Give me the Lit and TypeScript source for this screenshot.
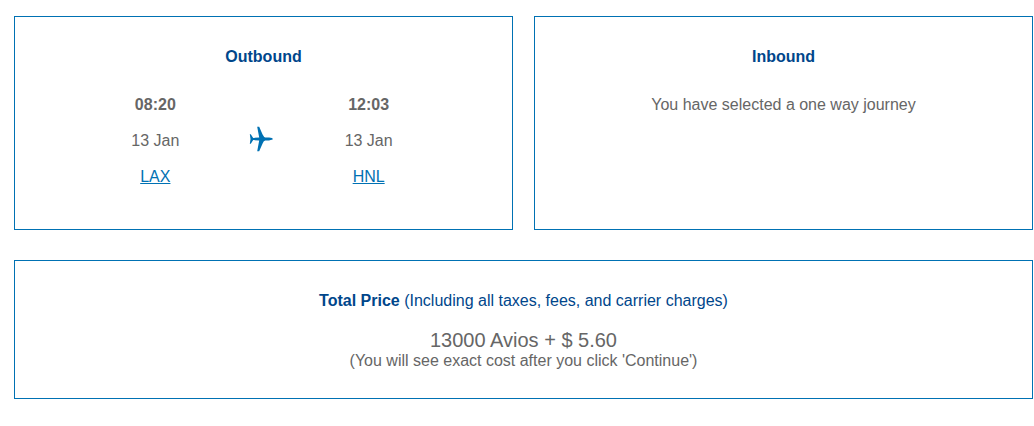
import { LitElement, html, css } from "lit";
import { customElement, property } from "lit/decorators.js";

interface Stop {
  time: string;
  date: string;
  airport: string;
}

const departure: Stop = { time: "08:20", date: "13 Jan", airport: "LAX" };
const arrival: Stop = { time: "12:03", date: "13 Jan", airport: "HNL" };

@customElement("flight-stop")
class FlightStop extends LitElement {
  @property({ attribute: false }) stop!: Stop;

  static styles = css`
    :host {
      display: flex;
      flex-direction: column;
      align-items: center;
      gap: 16px;
    }
    .time {
      font-weight: bold;
    }
    .airport {
      color: #0071b3;
      text-decoration: underline;
    }
  `;

  render() {
    return html`
      <span class="time">${this.stop.time}</span>
      <span>${this.stop.date}</span>
      <a class="airport" href="#${this.stop.airport}">${this.stop.airport}</a>
    `;
  }
}

@customElement("app-root")
class AppRoot extends LitElement {
  static styles = css`
    :host {
      display: block;
      padding: 16px 1px 27px 14px;
      background: #fff;
      color: #666;
      font: 16px/20px "Liberation Sans", Arial, sans-serif;
      text-align: center;
    }
    .summary {
      display: grid;
      grid-template-columns: 1fr 1fr;
      column-gap: 21px;
      row-gap: 30px;
    }
    .card {
      border: 1px solid #0071b3;
      padding: 30px 16px 27px;
    }
    .total {
      grid-column: 1 / -1;
    }
    .title {
      margin: 0 0 28px;
      font-size: 16px;
      color: #00468b;
    }
    .total .title {
      margin-bottom: 19px;
    }
    .note {
      font-weight: normal;
    }
    .route {
      display: grid;
      grid-template-columns: repeat(3, 1fr);
      max-width: 320px;
      margin: 0 auto;
      padding: 0 3px 15px 0;
      align-items: center;
    }
    .plane {
      display: block;
      width: 26px;
      height: 26px;
      margin: 0 auto;
      padding-bottom: 4px;
      fill: #0071b3;
    }
    .text {
      margin: 0;
    }
    .price {
      font-size: 20px;
      line-height: 21px;
    }
  `;

  render() {
    return html`
      <main class="summary">
        <section class="card">
          <h2 class="title">Outbound</h2>
          <div class="route">
            <flight-stop .stop=${departure}></flight-stop>
            <svg class="plane" viewBox="0 0 26 26" aria-hidden="true">
              <path
                d="M0.8 8.2H1.8L4.2 11.9L10.2 11.4L8.2 0.8H10.2Q12 5 13.6 8.6Q14.8 11.2 16.2 11.4L20 11.6Q23.8 12.1 23.8 13Q23.8 13.9 20 14.4L16.2 14.6Q14.8 14.8 13.6 17.4Q12 21 10.2 25.2H8.2L10.2 14.6L4.2 14.1L1.8 17.8H0.8L1.5 13Z"
              />
            </svg>
            <flight-stop .stop=${arrival}></flight-stop>
          </div>
        </section>
        <section class="card">
          <h2 class="title">Inbound</h2>
          <p class="text">You have selected a one way journey</p>
        </section>
        <section class="card total">
          <h2 class="title">
            Total Price
            <span class="note">(Including all taxes, fees, and carrier charges)</span>
          </h2>
          <p class="text price">13000 Avios + $ 5.60</p>
          <p class="text">(You will see exact cost after you click 'Continue')</p>
        </section>
      </main>
    `;
  }
}
